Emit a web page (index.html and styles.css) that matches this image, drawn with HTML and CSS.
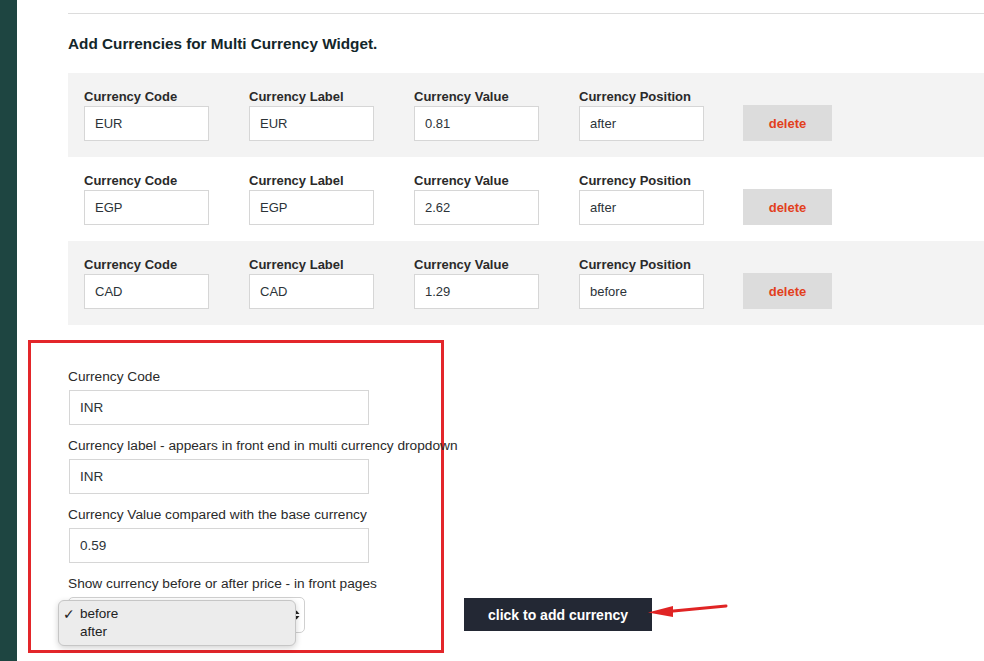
FILE: index.html
```html
<!DOCTYPE html>
<html lang="en">

<head>
    <meta charset="UTF-8">
    <title>Multi Currency Settings</title>
    <link rel="stylesheet" href="styles.css">
</head>

<body>
    <div class="page">
        <div class="sidebar"></div>

        <div class="main">
            <hr class="divider">
            <h2 class="heading">Add Currencies for Multi Currency Widget.</h2>

            <div class="currency-list">
                <div class="currency-row striped">
                    <div class="field"><label>Currency Code</label><input type="text" value="EUR"></div>
                    <div class="field"><label>Currency Label</label><input type="text" value="EUR"></div>
                    <div class="field"><label>Currency Value</label><input type="text" value="0.81"></div>
                    <div class="field"><label>Currency Position</label><input type="text" value="after"></div>
                    <button class="delete">delete</button>
                </div>
                <div class="currency-row">
                    <div class="field"><label>Currency Code</label><input type="text" value="EGP"></div>
                    <div class="field"><label>Currency Label</label><input type="text" value="EGP"></div>
                    <div class="field"><label>Currency Value</label><input type="text" value="2.62"></div>
                    <div class="field"><label>Currency Position</label><input type="text" value="after"></div>
                    <button class="delete">delete</button>
                </div>
                <div class="currency-row striped">
                    <div class="field"><label>Currency Code</label><input type="text" value="CAD"></div>
                    <div class="field"><label>Currency Label</label><input type="text" value="CAD"></div>
                    <div class="field"><label>Currency Value</label><input type="text" value="1.29"></div>
                    <div class="field"><label>Currency Position</label><input type="text" value="before"></div>
                    <button class="delete">delete</button>
                </div>
            </div>

            <div class="add-area">
                <div class="new-currency">
                    <div class="new-field">
                        <label>Currency Code</label>
                        <input type="text" value="INR">
                    </div>
                    <div class="new-field">
                        <label>Currency label - appears in front end in multi currency dropdown</label>
                        <input type="text" value="INR">
                    </div>
                    <div class="new-field">
                        <label>Currency Value compared with the base currency</label>
                        <input type="text" value="0.59">
                    </div>
                    <div class="new-field">
                        <label>Show currency before or after price - in front pages</label>
                        <div class="select">
                            <svg class="select-arrows" width="7" height="12" viewBox="0 0 7 12">
                                <path d="M3.5 1.5 L6.5 5 H0.5 Z" fill="#222"/>
                                <path d="M3.5 10.5 L6.5 7 H0.5 Z" fill="#222"/>
                            </svg>
                            <div class="select-menu">
                                <div class="option"><span class="check">✓</span>before</div>
                                <div class="option"><span class="check"></span>after</div>
                            </div>
                        </div>
                    </div>
                </div>

                <div class="add-action">
                    <button class="add-btn">click to add currency</button>
                    <svg class="pointer" width="82" height="20" viewBox="0 0 82 20">
                        <path d="M22 10.5 L80 5" stroke="#e02424" stroke-width="3" stroke-linecap="round"/>
                        <polygon points="2,11.5 27,5 27,16" fill="#e02424"/>
                    </svg>
                </div>
            </div>
        </div>
    </div>
</body>

</html>
```

FILE: styles.css
```css
* {
    margin: 0;
    padding: 0;
    box-sizing: border-box;
    font-family: 'Liberation Sans', Arial, sans-serif;
}

body {
    background: #fff;
    overflow: hidden;
    height: 661px;
}

.page {
    display: flex;
    min-height: 661px;
}

/* Sidebar */
.sidebar {
    width: 17px;
    flex-shrink: 0;
    background: #1e4541;
}

.main {
    flex: 1;
    padding-left: 51px;
    padding-top: 13px;
}

.divider {
    border: none;
    border-top: 1px solid #dcdcdc;
}

.heading {
    font-size: 15.3px;
    line-height: 20px;
    font-weight: bold;
    color: #13262a;
    margin-top: 20px;
    margin-bottom: 19px;
}

/* Existing currencies */
.currency-row {
    display: flex;
    align-items: flex-end;
    gap: 40px;
    height: 84px;
    padding: 14px 16px 16px;
}

.currency-row.striped {
    background: #f3f3f3;
}

.field {
    display: flex;
    flex-direction: column;
    width: 125px;
}

.field label {
    font-size: 13px;
    line-height: 17px;
    font-weight: bold;
    color: #2a2a2a;
    margin-bottom: 1px;
}

input[type="text"] {
    height: 35px;
    border: 1px solid #d6d6d6;
    background: #fff;
    padding: 0 10px;
    font-size: 13px;
    color: #2c3338;
    outline: none;
}

.field input {
    width: 125px;
}

.delete {
    width: 89px;
    height: 36px;
    margin-left: -1px;
    border: none;
    background: #dcdcdc;
    color: #e2401c;
    font-size: 13px;
    font-weight: bold;
    cursor: pointer;
}

/* New currency form */
.add-area {
    display: flex;
    margin-top: 15px;
    margin-left: -40px;
    gap: 20px;
}

.new-currency {
    width: 416px;
    border: 3px solid #e3262a;
    padding: 25px 0 17px 37px;
}

.new-field label {
    display: block;
    font-size: 13.7px;
    line-height: 17px;
    color: #2a2a2a;
    margin-bottom: 5px;
    white-space: nowrap;
}

.new-field input {
    width: 300px;
    margin-left: 1px;
    font-size: 13.5px;
}

.new-field + .new-field {
    margin-top: 12px;
}

.select {
    position: relative;
    width: 237px;
    height: 36px;
    border: 1px solid #d0d0d0;
    border-radius: 5px;
    display: flex;
    align-items: center;
    justify-content: flex-end;
    padding-right: 4px;
}

.select-menu {
    position: absolute;
    left: -11px;
    top: 2px;
    width: 238px;
    padding: 4px 0;
    background: #ececec;
    border: 1px solid #c6c6c6;
    border-radius: 6px;
    box-shadow: 0 2px 6px rgba(0, 0, 0, 0.18);
}

.option {
    display: flex;
    align-items: center;
    font-size: 13.5px;
    line-height: 18px;
    color: #222;
}

.check {
    width: 21px;
    padding-left: 4px;
    font-size: 14px;
    font-family: 'DejaVu Sans', sans-serif;
}

/* Add button */
.add-action {
    align-self: flex-end;
    display: flex;
    align-items: center;
    margin-bottom: 22px;
}

.add-btn {
    width: 188px;
    height: 33px;
    border: none;
    background: #232834;
    color: #fff;
    font-size: 14px;
    font-weight: bold;
    cursor: pointer;
}

.pointer {
    margin-left: -6px;
    margin-top: -8px;
}
```
